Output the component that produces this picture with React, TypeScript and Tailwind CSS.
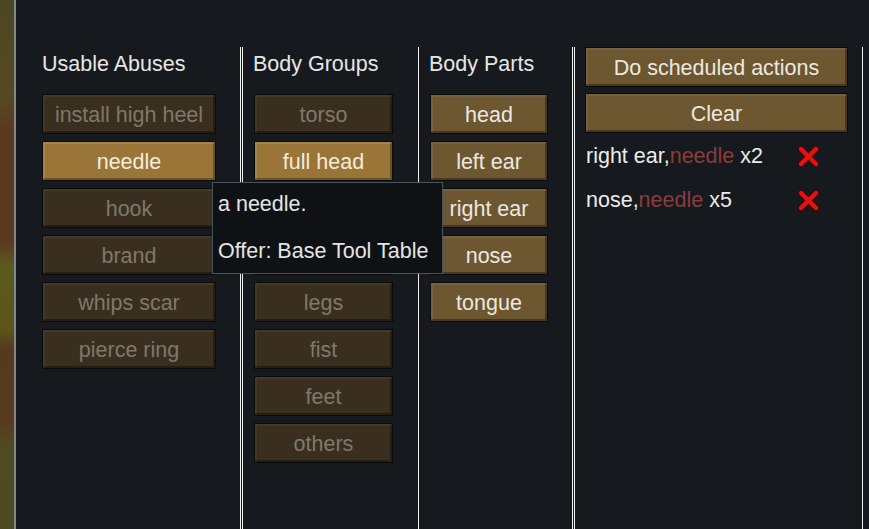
import React from "react";

type Tone = "dim" | "gold" | "mid";

const toneClass: Record<Tone, string> = {
  dim: "bg-[#3a2f1e] text-[#7f786d] shadow-[inset_2px_2px_0_rgba(255,255,255,0.05),inset_-2px_-2px_0_rgba(0,0,0,0.35)]",
  gold: "bg-[#9a7538] text-[#f4ecdc] shadow-[inset_2px_2px_0_rgba(255,255,255,0.1),inset_-2px_-2px_0_rgba(0,0,0,0.3)]",
  mid: "bg-[#6c5731] text-[#ece8e0] shadow-[inset_2px_2px_0_rgba(255,255,255,0.07),inset_-2px_-2px_0_rgba(0,0,0,0.35)]",
};

const GameButton = ({ label, tone, width }: { label: string; tone: Tone; width: string }) => (
  <div
    className={`flex h-[40px] shrink-0 items-center justify-center border border-[#0b0b0a] pt-[2px] leading-[24px] ${width} ${toneClass[tone]}`}
  >
    {label}
  </div>
);

const Header = ({ children }: { children: React.ReactNode }) => (
  <div className="pt-[5px] text-[#e6e6e6] leading-[24px]">{children}</div>
);

const DoubleSep = () => <div className="w-[3px] shrink-0 border-x border-[#f2f2f2]" />;
const SingleSep = () => <div className="w-[1px] shrink-0 bg-[#f2f2f2]" />;

const RemoveIcon = () => (
  <svg width="25" height="25" viewBox="0 0 25 25">
    <path d="M5 5 L20 20 M20 5 L5 20" stroke="#3d0806" strokeWidth="7" strokeLinecap="round" />
    <path d="M5 5 L20 20 M20 5 L5 20" stroke="#e3140f" strokeWidth="4.4" strokeLinecap="round" />
  </svg>
);

const abuses: [string, Tone][] = [
  ["install high heel", "dim"],
  ["needle", "gold"],
  ["hook", "dim"],
  ["brand", "dim"],
  ["whips scar", "dim"],
  ["pierce ring", "dim"],
];

// the 3rd and 4th groups sit under the tooltip, so they are left unlabelled
const groups: [string, Tone][] = [
  ["torso", "dim"],
  ["full head", "gold"],
  ["", "dim"],
  ["", "dim"],
  ["legs", "dim"],
  ["fist", "dim"],
  ["feet", "dim"],
  ["others", "dim"],
];

const parts = ["head", "left ear", "right ear", "nose", "tongue"];

const scheduled = [
  { part: "right ear", abuse: "needle", count: 2 },
  { part: "nose", abuse: "needle", count: 5 },
];

export default function App() {
  return (
    <div
      className="relative flex h-[529px] w-[869px] overflow-hidden bg-[#161a1e] text-[21.5px]"
      style={{ fontFamily: '"Liberation Sans", Arial, sans-serif' }}
    >
      {/* map behind the window */}
      <div className="w-[14px] shrink-0 bg-[linear-gradient(180deg,#4b4622_0%,#554a22_18%,#5a3a1f_24%,#5b3b20_46%,#5a5a1e_50%,#5c561c_62%,#553a1e_66%,#5a3b1f_80%,#4f4a22_84%,#4b4a20_100%)]" />
      <div className="w-[2px] shrink-0 bg-[#84878a]" />

      <div className="mt-[47px] flex h-[482px] flex-1">
        <div className="w-[224px] shrink-0 pl-[26px]">
          <Header>Usable Abuses</Header>
          <div className="mt-[18px] flex flex-col gap-[7px]">
            {abuses.map(([label, tone]) => (
              <GameButton key={label} label={label} tone={tone} width="w-[174px]" />
            ))}
          </div>
        </div>

        <DoubleSep />

        <div className="w-[175px] shrink-0 pl-[10px]">
          <Header>Body Groups</Header>
          <div className="mt-[18px] flex flex-col gap-[7px] pl-[1px]">
            {groups.map(([label, tone], i) => (
              <GameButton key={i} label={label} tone={tone} width="w-[139px]" />
            ))}
          </div>
        </div>

        <SingleSep />

        <div className="w-[153px] shrink-0 pl-[10px]">
          <Header>Body Parts</Header>
          <div className="mt-[18px] flex flex-col gap-[7px] pl-[1px]">
            {parts.map((label) => (
              <GameButton key={label} label={label} tone="mid" width="w-[118px]" />
            ))}
          </div>
        </div>

        <DoubleSep />

        <div className="w-[287px] shrink-0 pl-[10px]">
          <div className="flex flex-col gap-[6px]">
            <GameButton label="Do scheduled actions" tone="mid" width="w-[263px]" />
            <GameButton label="Clear" tone="mid" width="w-[263px]" />
          </div>
          <div className="mt-[1px] flex flex-col">
            {scheduled.map((s) => (
              <div key={s.part} className="flex h-[44px] items-center leading-[24px] text-[#ececec]">
                <span className="w-[211px] pl-[1px]">
                  {s.part},<span className="text-[#8c3a3a]">{s.abuse}</span> x{s.count}
                </span>
                <RemoveIcon />
              </div>
            ))}
          </div>
        </div>

        <SingleSep />
      </div>

      {/* tooltip for hovered "needle" */}
      <div className="absolute left-[212px] top-[182px] h-[92px] w-[231px] border border-[#46525c] bg-[#0e1215] pl-[5px] pt-[10px] leading-[23.5px] text-[#e4e4e4]">
        <div>a needle.</div>
        <div className="h-[23.5px]" />
        <div>Offer: Base Tool Table</div>
      </div>
    </div>
  );
}
